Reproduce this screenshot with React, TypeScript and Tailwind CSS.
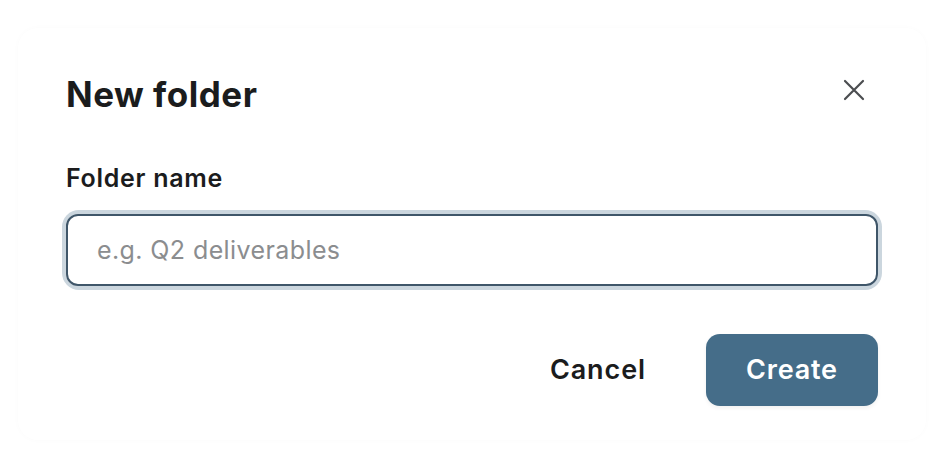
import React from "react";

export default function App() {
  return (
    <div className="min-h-[472px] w-full bg-white pt-[28px] pl-[18px] pr-[18px]" style={{ fontFamily: "Inter, 'Noto Sans', sans-serif" }}>
      <div className="w-[908px] rounded-[20px] bg-white px-[48px] pt-[46px] pb-[34px] shadow-[0_0_6px_rgba(0,0,0,0.02)]">
        <div className="flex items-start justify-between">
          <h2 className="text-[35px] leading-[40px] font-bold tracking-[0.5px] text-[#1b1c1d]">New folder</h2>
          <button className="flex h-[32px] w-[48px] items-center justify-center text-[#4b4d50]">
            <svg width="22" height="22" viewBox="0 0 22 22" fill="none" stroke="currentColor" strokeWidth="2.2" strokeLinecap="round">
              <path d="M2 2L20 20M20 2L2 20" />
            </svg>
          </button>
        </div>
        <label className="mt-[48px] block text-[25px] leading-[32px] font-semibold tracking-[0.7px] text-[#1b1c1d]">Folder name</label>
        <div className="mt-[20px] rounded-[13px] shadow-[0_0_0_4px_#cbd6de]">
          <input
            placeholder="e.g. Q2 deliverables"
            className="block h-[72px] w-full rounded-[12px] border-2 border-[#3f5669] bg-white px-[29px] text-[25px] tracking-[0.4px] text-[#1b1c1d] outline-none placeholder:text-[#8b8d8f]"
          />
        </div>
        <div className="mt-[48px] flex items-center justify-end gap-[20px]">
          <button className="h-[72px] px-[40px] text-[27px] font-semibold tracking-[0.9px] text-[#1b1c1d]">Cancel</button>
          <button className="h-[72px] w-[172px] rounded-[14px] bg-[#456d89] text-[27px] font-semibold tracking-[0.8px] text-white shadow-[0_2px_4px_rgba(0,0,0,0.06)]">Create</button>
        </div>
      </div>
    </div>
  );
}
